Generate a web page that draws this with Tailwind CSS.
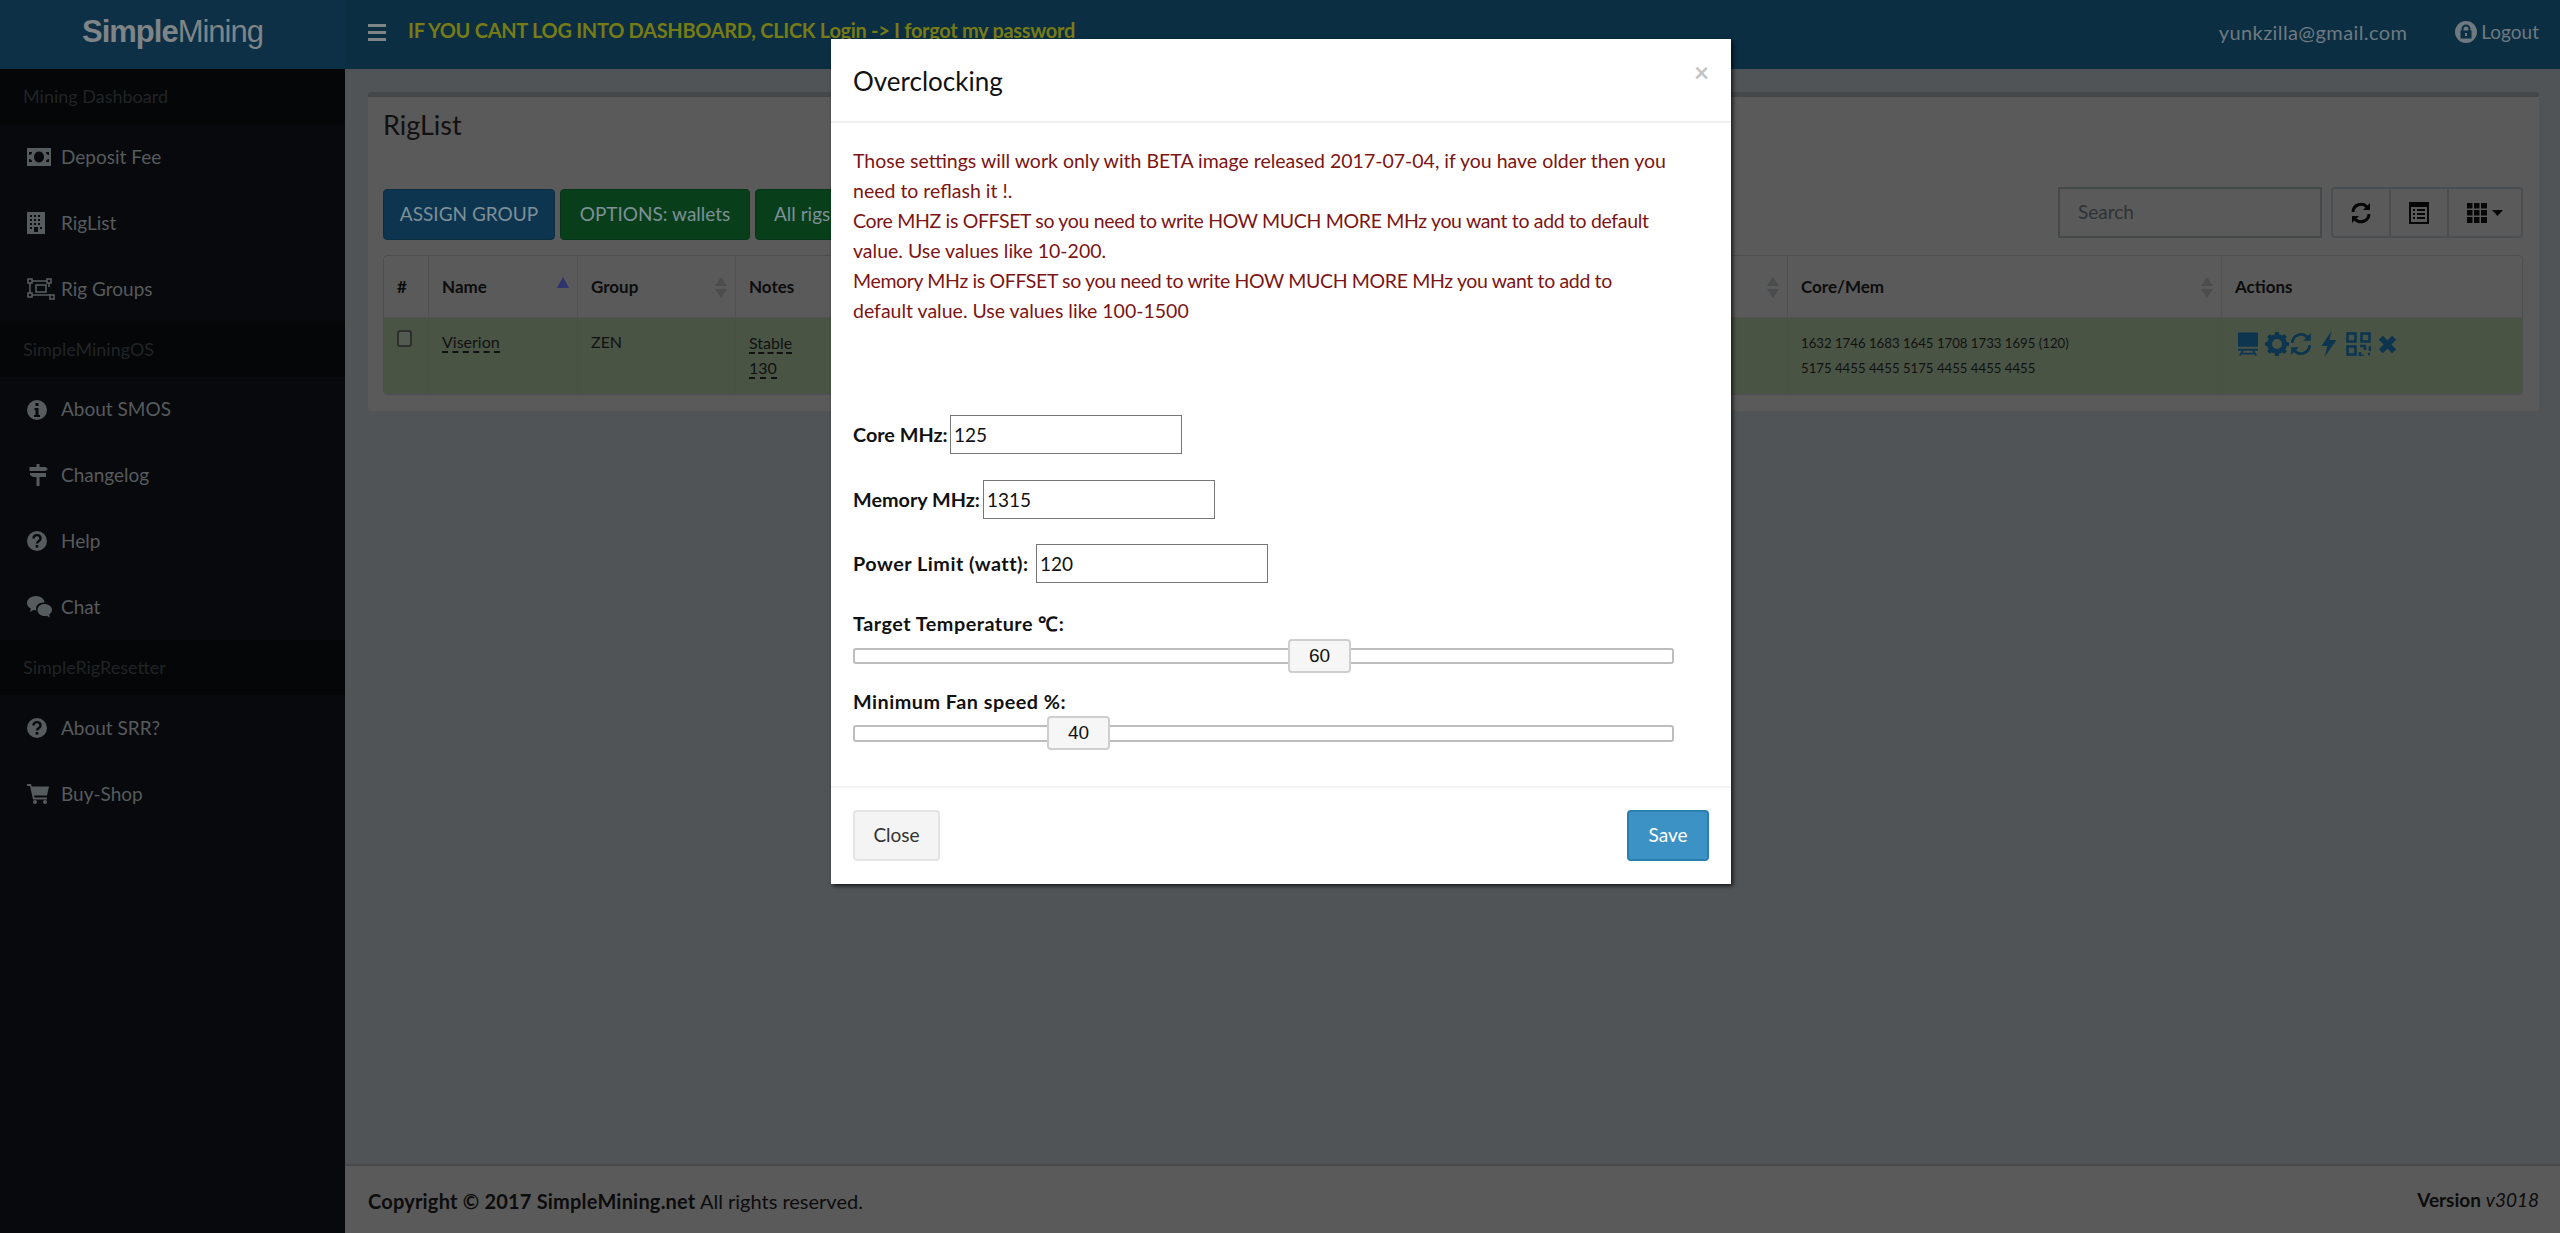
<!DOCTYPE html>
<html lang="en">
<head>
    <meta charset="UTF-8">
    <title>SimpleMining - RigList</title>
    <script src="https://cdn.jsdelivr.net/npm/@tailwindcss/browser@4"></script>
</head>
<body class="h-screen overflow-hidden bg-[#505457] font-['Lato','Liberation_Sans',sans-serif] text-[19px] text-[#0c0c0c]">
    <div class="flex h-full">
        <!-- sidebar -->
        <aside class="w-[345px] shrink-0 bg-[#08090c] text-[#565b5d]">
            <div class="flex h-[69px] items-center justify-center bg-[#0d3046] pb-1 font-['Liberation_Sans',sans-serif] text-[31px] tracking-[-1px] text-[#7f8487]">
                <b>Simple</b>Mining
            </div>
            <div class="flex h-[55px] items-center pl-[23px] text-[18px] text-[#202426] bg-[#050608]">Mining Dashboard</div>
            <a class="flex h-[66px] items-center"><span class="flex w-[61px] justify-start pl-[27px]"><svg class="h-[18px] w-[24px]" viewBox="0 0 24 18" fill="currentColor"><path fill-rule="evenodd" d="M0 0h24v18H0zM2 4v10h3a3 3 0 0 0-3-3V7a3 3 0 0 0 3-3zm20 0h-3a3 3 0 0 0 3 3v4a3 3 0 0 0-3 3h3zM12 3.500a5 5.500 0 1 0 .01 0z"/></svg></span>Deposit Fee</a>
            <a class="flex h-[66px] items-center"><span class="flex w-[61px] pl-[27px]"><svg class="h-[22px] w-[18px]" viewBox="0 0 18 22" fill="currentColor"><path fill-rule="evenodd" d="M0 0h18v22H0zM3 3v2h2V3zm4 0v2h2V3zm4 0v2h2V3zM3 7v2h2V7zm4 0v2h2V7zm4 0v2h2V7zM3 11v2h2v-2zm4 0v2h2v-2zm4 0v2h2v-2zM3 15v2h2v-2zm4 0v5h4v-5zm6 0v2h2v-2z"/></svg></span>RigList</a>
            <a class="flex h-[66px] items-center"><span class="flex w-[61px] pl-[27px]"><svg class="h-[22px] w-[28px]" viewBox="0 0 28 22" fill="none" stroke="currentColor" stroke-width="1.600"><rect x="1" y="1" width="4" height="4"/><rect x="20" y="1" width="4" height="4"/><rect x="1" y="15" width="4" height="4"/><rect x="23" y="17" width="4" height="4"/><path d="M5 3h15M3 5v10M5 17h18M22 5v4"/><rect x="9" y="7" width="10" height="7"/></svg></span>Rig Groups</a>
            <div class="flex h-[55px] items-center pl-[23px] text-[18px] text-[#202426] bg-[#050608]">SimpleMiningOS</div>
            <a class="flex h-[65px] items-center"><span class="flex w-[61px] pl-[27px]"><svg class="h-[20px] w-[20px]" viewBox="0 0 20 20"><circle cx="10" cy="10" r="10" fill="currentColor"/><path fill="#08090c" d="M8.500 3h3v3h-3zM7.500 8h4v7h1.500v2H7v-2h1.500v-5h-1z"/></svg></span>About SMOS</a>
            <a class="flex h-[66px] items-center"><span class="flex w-[61px] pl-[27px]"><svg class="h-[22px] w-[22px]" viewBox="0 0 22 22" fill="currentColor"><path d="M9.500 0h3v3h6l2.500 2-2.500 2h-16V3h7zM3 9h16v4H6l-3-2zM9.500 13h3v9h-3z"/></svg></span>Changelog</a>
            <a class="flex h-[66px] items-center"><span class="flex w-[61px] pl-[27px]"><svg class="h-[20px] w-[20px]" viewBox="0 0 20 20"><circle cx="10" cy="10" r="10" fill="currentColor"/><path fill="none" stroke="#08090c" stroke-width="2.400" d="M6.500 7.500c0-4.500 7-4.500 7 0 0 2.800-3.500 2.500-3.500 5"/><rect x="8.700" y="14" width="2.600" height="2.600" fill="#08090c"/></svg></span>Help</a>
            <a class="flex h-[66px] items-center"><span class="flex w-[61px] pl-[27px]"><svg class="h-[22px] w-[25px]" viewBox="0 0 25 22" fill="currentColor"><path d="M9 0c5 0 8.500 3 8.500 6.500-5-.5-8.500 2.500-8.500 6 0 .7.100 1.200.3 1.800-1 0-2-.1-2.800-.4L3 16l.8-3.200C1.500 11.300 0 9.500 0 7c0-4 4-7 9-7z"/><path d="M17.500 8c4 0 7.500 2.500 7.500 5.800 0 2-1.200 3.500-2.800 4.700l.6 3-3-1.800c-.8.200-1.500.3-2.300.3-4 0-7-2.700-7-6s3-6 7-6z"/></svg></span>Chat</a>
            <div class="flex h-[55px] items-center pl-[23px] text-[18px] text-[#202426] bg-[#050608]">SimpleRigResetter</div>
            <a class="flex h-[66px] items-center"><span class="flex w-[61px] pl-[27px]"><svg class="h-[20px] w-[20px]" viewBox="0 0 20 20"><circle cx="10" cy="10" r="10" fill="currentColor"/><path fill="none" stroke="#08090c" stroke-width="2.400" d="M6.500 7.500c0-4.500 7-4.500 7 0 0 2.800-3.500 2.500-3.500 5"/><rect x="8.700" y="14" width="2.600" height="2.600" fill="#08090c"/></svg></span>About SRR?</a>
            <a class="flex h-[66px] items-center"><span class="flex w-[61px] pl-[27px]"><svg class="h-[20px] w-[22px]" viewBox="0 0 22 20" fill="currentColor"><path d="M0 0h4l.8 2.500H22l-2 9H7l.5 2H20v2H6L3 2H0z"/><circle cx="8" cy="18" r="2"/><circle cx="18" cy="18" r="2"/></svg></span>Buy-Shop</a>
        </aside>

        <div class="flex min-w-0 flex-1 flex-col">
            <!-- top bar -->
            <header class="flex h-[69px] shrink-0 items-center bg-[#0b2e43] pb-[5px] pl-[23px] pr-[21px]">
                <svg class="h-[17px] w-[18px] text-[#7f8487]" viewBox="0 0 18 17" fill="currentColor"><rect width="18" height="3"/><rect y="7" width="18" height="3"/><rect y="14" width="18" height="3"/></svg>
                <span class="ml-[22px] mb-[4px] text-[20px] font-bold tracking-[-0.3px] text-[#777b16]">IF YOU CANT LOG INTO DASHBOARD, CLICK Login -&gt; I forgot my password</span>
                <span class="ml-auto text-[20px] tracking-[0.4px] text-[#6f7a80]">yunkzilla@gmail.com</span>
                <span class="ml-[48px] flex items-center gap-[4px] text-[#6f7a80]">
                    <svg class="h-[22px] w-[22px]" viewBox="0 0 22 22"><circle cx="11" cy="11" r="11" fill="currentColor"/><path fill="#0b2e43" fill-rule="evenodd" d="M6.500 9.500V8a4.500 4.500 0 0 1 9 0v1.500h1v8h-11v-8zm2 0h5V8a2.500 2.500 0 0 0-5 0zM10 12v3h2v-3z"/></svg>
                    Logout
                </span>
            </header>

            <main class="flex-1 px-[23px] pt-[23px]">
                <section class="h-[319px] w-[2171px] rounded-[3px] border-t-[5px] border-[#44484a] bg-[#5a5a5a] px-[15px] pt-[10px]">
                    <h3 class="text-[27px] leading-[36px] text-[#111]">RigList</h3>
                    <div class="mt-[44px] flex items-center justify-between">
                        <div class="flex gap-[5px] text-[19px] text-[#7d8f97]">
                            <button class="h-[51px] w-[172px] rounded-[4px] border border-[#0b2e43] bg-[#0d3550]">ASSIGN GROUP</button>
                            <button class="h-[51px] w-[190px] rounded-[4px] border border-[#07351a] bg-[#083f1a]">OPTIONS: wallets</button>
                            <button class="h-[51px] w-[150px] rounded-[4px] border border-[#07351a] bg-[#083f1a] pl-[18px] text-left">All rigs</button>
                        </div>
                        <div class="mb-[4px] mr-[1px] flex gap-[9px]">
                            <div class="flex h-[51px] w-[264px] items-center border-2 border-[#45494a] pl-[18px] text-[#2f3234]">Search</div>
                            <div class="flex h-[51px] w-[192px] rounded-[4px] border-2 border-[#4c4f51] text-[#060606]">
                                <span class="flex w-[58px] items-center justify-center border-r-2 border-[#4c4f51]">
                                    <svg class="h-[22px] w-[22px]" viewBox="0 0 22 22" fill="none" stroke="currentColor" stroke-width="3"><path d="M3 10a8 8 0 0 1 14-5"/><path fill="currentColor" stroke="none" d="M20 1v7h-7z"/><path d="M19 12a8 8 0 0 1-14 5"/><path fill="currentColor" stroke="none" d="M2 21v-7h7z"/></svg>
                                </span>
                                <span class="flex w-[58px] items-center justify-center border-r-2 border-[#4c4f51]">
                                    <svg class="h-[22px] w-[20px]" viewBox="0 0 20 22" fill="currentColor"><path fill-rule="evenodd" d="M0 0h20v22H0zM2 5v15h16V5zM4 7h2v2H4zm4 0h8v2H8zM4 11h2v2H4zm4 0h8v2H8zM4 15h2v2H4zm4 0h8v2H8z"/></svg>
                                </span>
                                <span class="flex flex-1 items-center justify-center gap-[5px]">
                                    <svg class="h-[20px] w-[20px]" viewBox="0 0 20 20" fill="currentColor"><path d="M0 0h5.500v5.500H0zM7 0h5.500v5.500H7zM14 0h6v5.500h-6zM0 7h5.500v5.500H0zM7 7h5.500v5.500H7zM14 7h6v5.500h-6zM0 14h5.500v6H0zM7 14h5.500v6H7zM14 14h6v6h-6z"/></svg>
                                    <svg class="h-[6px] w-[11px]" viewBox="0 0 11 6" fill="currentColor"><path d="M0 0h11L5.500 6z"/></svg>
                                </span>
                            </div>
                        </div>
                    </div>

                    <table class="mt-[13px] w-[2140px] table-fixed border-separate border-spacing-0 overflow-hidden rounded-[4px] border border-[#4c4f51] text-[17px]">
                        <colgroup>
                            <col class="w-[45px]"><col class="w-[149px]"><col class="w-[158px]"><col class="w-[500px]"><col class="w-[552px]"><col class="w-[434px]"><col>
                        </colgroup>
                        <thead class="font-bold">
                            <tr class="h-[62px] text-left">
                                <th class="border-r border-b border-[#525252] pl-[13px]">#</th>
                                <th class="relative border-r border-b border-[#525252] pl-[13px]">Name<svg class="absolute right-[8px] top-[21px] h-[11px] w-[12px] text-[#2f3470]" viewBox="0 0 12 11" fill="currentColor"><path d="M6 0l6 11H0z"/></svg></th>
                                <th class="relative border-r border-b border-[#525252] pl-[13px]">Group<svg class="absolute right-[8px] top-[21px] h-[21px] w-[12px] text-[#4a4c4e]" viewBox="0 0 12 21" fill="currentColor"><path d="M6 0l6 9H0zM6 21l6-9H0z"/></svg></th>
                                <th class="border-r border-b border-[#525252] pl-[13px]">Notes</th>
                                <th class="relative border-r border-b border-[#525252]"><svg class="absolute right-[8px] top-[21px] h-[21px] w-[12px] text-[#4a4c4e]" viewBox="0 0 12 21" fill="currentColor"><path d="M6 0l6 9H0zM6 21l6-9H0z"/></svg></th>
                                <th class="relative border-r border-b border-[#525252] pl-[13px]">Core/Mem<svg class="absolute right-[8px] top-[21px] h-[21px] w-[12px] text-[#4a4c4e]" viewBox="0 0 12 21" fill="currentColor"><path d="M6 0l6 9H0zM6 21l6-9H0z"/></svg></th>
                                <th class="border-b border-[#525252] pl-[13px]">Actions</th>
                            </tr>
                        </thead>
                        <tbody class="bg-[#4a5445] align-top text-[16px] text-[#111]">
                            <tr class="h-[76px]">
                                <td class="border-r border-[#485244] pl-[13px] pt-[12px]"><span class="block h-[17px] w-[15px] rounded-[3px] border-2 border-[#2c2f2c] bg-[#535a52]"></span></td>
                                <td class="border-r border-[#485244] pl-[13px] pt-[12px]"><span class="border-b-2 border-dashed border-[#111]">Viserion</span></td>
                                <td class="border-r border-[#485244] pl-[13px] pt-[12px]">ZEN</td>
                                <td class="border-r border-[#485244] pl-[13px] pt-[12px] leading-[25px]"><span class="border-b-2 border-dashed border-[#111]">Stable</span><br><span class="border-b-2 border-dashed border-[#111]">130</span></td>
                                <td class="border-r border-[#485244]"></td>
                                <td class="border-r border-[#485244] pl-[13px] pt-[13px] text-[13.200px] leading-[25px]">1632 1746 1683 1645 1708 1733 1695 (120)<br>5175 4455 4455 5175 4455 4455 4455</td>
                                <td class="pl-[16px] pt-[13px]">
                                    <div class="flex items-center text-[#0d3550]">
                                        <svg class="h-[24px] w-[20px]" viewBox="0 0 21 24" fill="currentColor"><path d="M0 0h21v15H0zM0 17h21v2H0z"/><path fill="none" stroke="currentColor" stroke-width="1.800" d="M5 19l-3 5M16 19l3 5M3 22h15"/></svg>
                                        <svg class="ml-[7px] h-[24px] w-[24px]" viewBox="0 0 24 24"><circle cx="12" cy="12" r="7.500" fill="none" stroke="currentColor" stroke-width="5"/><path stroke="currentColor" stroke-width="4" d="M12 0v5M12 19v5M0 12h5M19 12h5M3.500 3.500l3.500 3.500M17 17l3.500 3.500M20.500 3.500L17 7M7 17l-3.500 3.500"/></svg>
                                        <svg class="h-[24px] w-[24px]" viewBox="0 0 22 22" fill="none" stroke="currentColor" stroke-width="2.600"><path d="M3 10a8 8 0 0 1 14-5"/><path fill="currentColor" stroke="none" d="M20 1v7h-7z"/><path d="M19 12a8 8 0 0 1-14 5"/><path fill="currentColor" stroke="none" d="M2 21v-7h7z"/></svg>
                                        <svg class="ml-[8px] h-[26px] w-[16px]" viewBox="0 0 15 26" fill="currentColor"><path d="M10 0L0 15h6l-3 11L15 9H8z"/></svg>
                                        <svg class="ml-[9px] h-[24px] w-[25px]" viewBox="0 0 25 24" fill="none" stroke="currentColor" stroke-width="2.600"><rect x="1.500" y="1.500" width="8" height="8"/><rect x="15.500" y="1.500" width="8" height="8"/><rect x="1.500" y="14.500" width="8" height="8"/><path d="M14 14h5v4M24 14v5M14 20v4h4M22 22h2"/></svg>
                                        <svg class="ml-[7px] h-[19px] w-[19px]" viewBox="0 0 20 20" fill="none" stroke="currentColor" stroke-width="6"><path d="M3 3l14 14M17 3L3 17"/></svg>
                                    </div>
                                </td>
                            </tr>
                        </tbody>
                    </table>
                </section>
            </main>

            <footer class="flex h-[69px] shrink-0 items-center justify-between border-t-2 border-[#464a4c] bg-[#5a5a5a] pl-[23px] pr-[21px] pt-[2px] text-[#0c0c0c]">
                <span class="text-[20px]"><b class="tracking-[0.2px]">Copyright © 2017 SimpleMining.net</b> All rights reserved.</span>
                <span><b>Version</b> <i>v3018</i></span>
            </footer>
        </div>
    </div>

    <!-- modal -->
    <div class="absolute left-[831px] top-[39px] h-[845px] w-[900px] bg-white text-[#111] shadow-[2px_2px_4px_rgba(0,0,0,0.7)]">
        <div class="relative flex h-[84px] items-center border-b-2 border-[#f0f0f0] pl-[22px] pt-[2px] text-[26px]">
            Overclocking
            <span class="absolute right-[22px] top-[14px] font-bold text-[26px] text-[#c4c4c4]">×</span>
        </div>
        <div class="flex h-[665px] flex-col border-b-2 border-[#f4f4f4] px-[22px] pt-[23px] text-[19.800px]">
            <p class="text-[19.500px] leading-[30px] text-[#7d1414]">
                Those settings will work only with BETA image released 2017-07-04, if you have older then you<br>
                need to reflash it !.<br>
                <span class="tracking-[-0.34px]">Core MHZ is OFFSET so you need to write HOW MUCH MORE MHz you want to add to default</span><br>
                value. Use values like 10-200.<br>
                <span class="tracking-[-0.36px]">Memory MHz is OFFSET so you need to write HOW MUCH MORE MHz you want to add to</span><br>
                default value. Use values like 100-1500
            </p>
            <div class="mt-[89px] flex h-[39px] items-center font-bold"><label class="w-[97px]">Core MHz:</label>
                <input value="125" class="h-[39px] w-[232px] border border-[#767676] pl-[3px] text-[19px] font-normal">
            </div>
            <div class="mt-[26px] flex h-[39px] items-center font-bold"><label class="w-[130px]">Memory MHz:</label>
                <input value="1315" class="h-[39px] w-[232px] border border-[#767676] pl-[3px] text-[19px] font-normal">
            </div>
            <div class="mt-[25px] flex h-[39px] items-center font-bold"><label class="w-[183px] tracking-[0.5px]">Power Limit (watt):</label>
                <input value="120" class="h-[39px] w-[232px] border border-[#767676] pl-[3px] text-[19px] font-normal">
            </div>
            <div class="mt-[27px] font-bold leading-[26px] tracking-[0.5px]">Target Temperature ℃:</div>
            <div class="relative mt-[3px] h-[34px] w-[821px]">
                <div class="absolute inset-x-0 top-[9px] h-[16px] rounded-[3px] border-2 border-[#bdbdbd]"></div>
                <div class="absolute left-[435px] flex h-[34px] w-[63px] items-center justify-center rounded-[4px] border-2 border-[#cfcfcf] bg-[#f6f6f6] font-['Liberation_Sans',sans-serif] text-[19px]">60</div>
            </div>
            <div class="mt-[15px] font-bold leading-[26px] tracking-[0.5px]">Minimum Fan speed %:</div>
            <div class="relative mt-[2px] h-[34px] w-[821px]">
                <div class="absolute inset-x-0 top-[9px] h-[17px] rounded-[3px] border-2 border-[#bdbdbd]"></div>
                <div class="absolute left-[194px] flex h-[34px] w-[63px] items-center justify-center rounded-[4px] border-2 border-[#cfcfcf] bg-[#f6f6f6] font-['Liberation_Sans',sans-serif] text-[19px]">40</div>
            </div>
        </div>
        <div class="flex items-center justify-between px-[22px] pt-[22px]">
            <button class="h-[51px] w-[87px] rounded-[4px] border-2 border-[#e4e4e4] bg-[#f4f4f4] text-[#333]">Close</button>
            <button class="h-[51px] w-[82px] rounded-[4px] border-2 border-[#2a7fae] bg-[#3c92c4] text-white">Save</button>
        </div>
    </div>
</body>
</html>
